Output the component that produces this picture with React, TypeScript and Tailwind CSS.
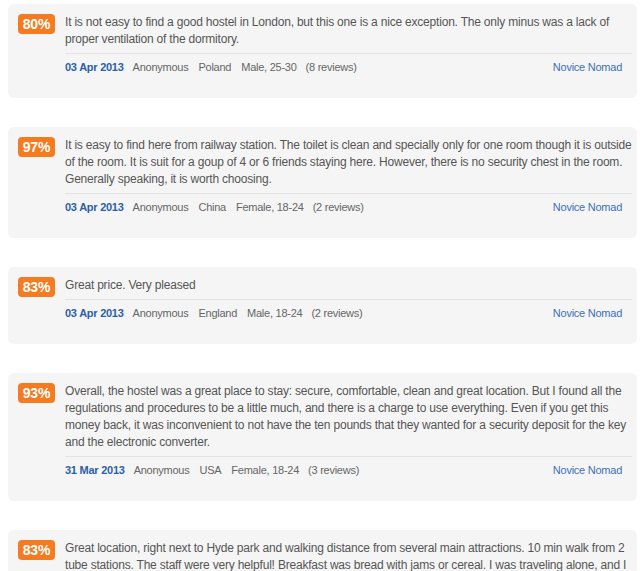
const REVIEWS = [
  {
    score: 80,
    text: 'It is not easy to find a good hostel in London, but this one is a nice exception. The only minus was a lack of proper ventilation of the dormitory.',
    date: '03 Apr 2013',
    country: 'Poland',
    who: 'Male, 25-30',
    count: 8,
  },
  {
    score: 97,
    text: 'It is easy to find here from railway station. The toilet is clean and specially only for one room though it is outside of the room. It is suit for a goup of 4 or 6 friends staying here. However, there is no security chest in the room. Generally speaking, it is worth choosing.',
    date: '03 Apr 2013',
    country: 'China',
    who: 'Female, 18-24',
    count: 2,
  },
  {
    score: 83,
    text: 'Great price. Very pleased',
    date: '03 Apr 2013',
    country: 'England',
    who: 'Male, 18-24',
    count: 2,
  },
  {
    score: 93,
    text: 'Overall, the hostel was a great place to stay: secure, comfortable, clean and great location. But I found all the regulations and procedures to be a little much, and there is a charge to use everything. Even if you get this money back, it was inconvenient to not have the ten pounds that they wanted for a security deposit for the key and the electronic converter.',
    date: '31 Mar 2013',
    country: 'USA',
    who: 'Female, 18-24',
    count: 3,
  },
  {
    score: 83,
    text: 'Great location, right next to Hyde park and walking distance from several main attractions. 10 min walk from 2 tube stations. The staff were very helpful! Breakfast was bread with jams or cereal. I was traveling alone, and I felt safe and welcome the whole time I stayed here.',
    date: '30 Mar 2013',
    country: 'Australia',
    who: 'Female, 25-30',
    count: 1,
  },
];

type Review = (typeof REVIEWS)[number];

function ReviewCard({ review }: { review: Review }) {
  return (
    <div className="flex gap-[10px] rounded-[6px] bg-[#f5f5f5] pl-[10px] pr-[5px] pt-[10px] pb-[22px]">
      <div className="h-[20px] w-[37px] flex-shrink-0 rounded-[4px] bg-[#f47b20] text-center text-[14px] font-bold leading-[20px] tracking-[-0.2px] text-white">
        {review.score}%
      </div>
      <div className="min-w-0 flex-1">
        <p className="mb-[5px] text-[12px] leading-[17px] tracking-[-0.2px] text-[#555]">{review.text}</p>
        <div className="flex items-center border-t border-[#e3e3e3] pt-[5px] pr-[10px] text-[11px] leading-[17px] tracking-[-0.25px] text-[#666]">
          <span className="mr-[9px] font-bold text-[#2b5fa6]">{review.date}</span>
          <span className="mr-[10px]">Anonymous</span>
          <span className="mr-[10px]">{review.country}</span>
          <span className="mr-[9px]">{review.who}</span>
          <span>({review.count} reviews)</span>
          <span className="ml-auto text-[#3c70b4]">Novice Nomad</span>
        </div>
      </div>
    </div>
  );
}

export default function App() {
  return (
    <div className="min-h-screen bg-white pl-[8px] pr-[3px] pt-[4px] font-['Liberation_Sans',Arial,sans-serif]">
      <div className="flex flex-col gap-[29px]">
        {REVIEWS.map((r, i) => (
          <ReviewCard key={i} review={r} />
        ))}
      </div>
    </div>
  );
}
